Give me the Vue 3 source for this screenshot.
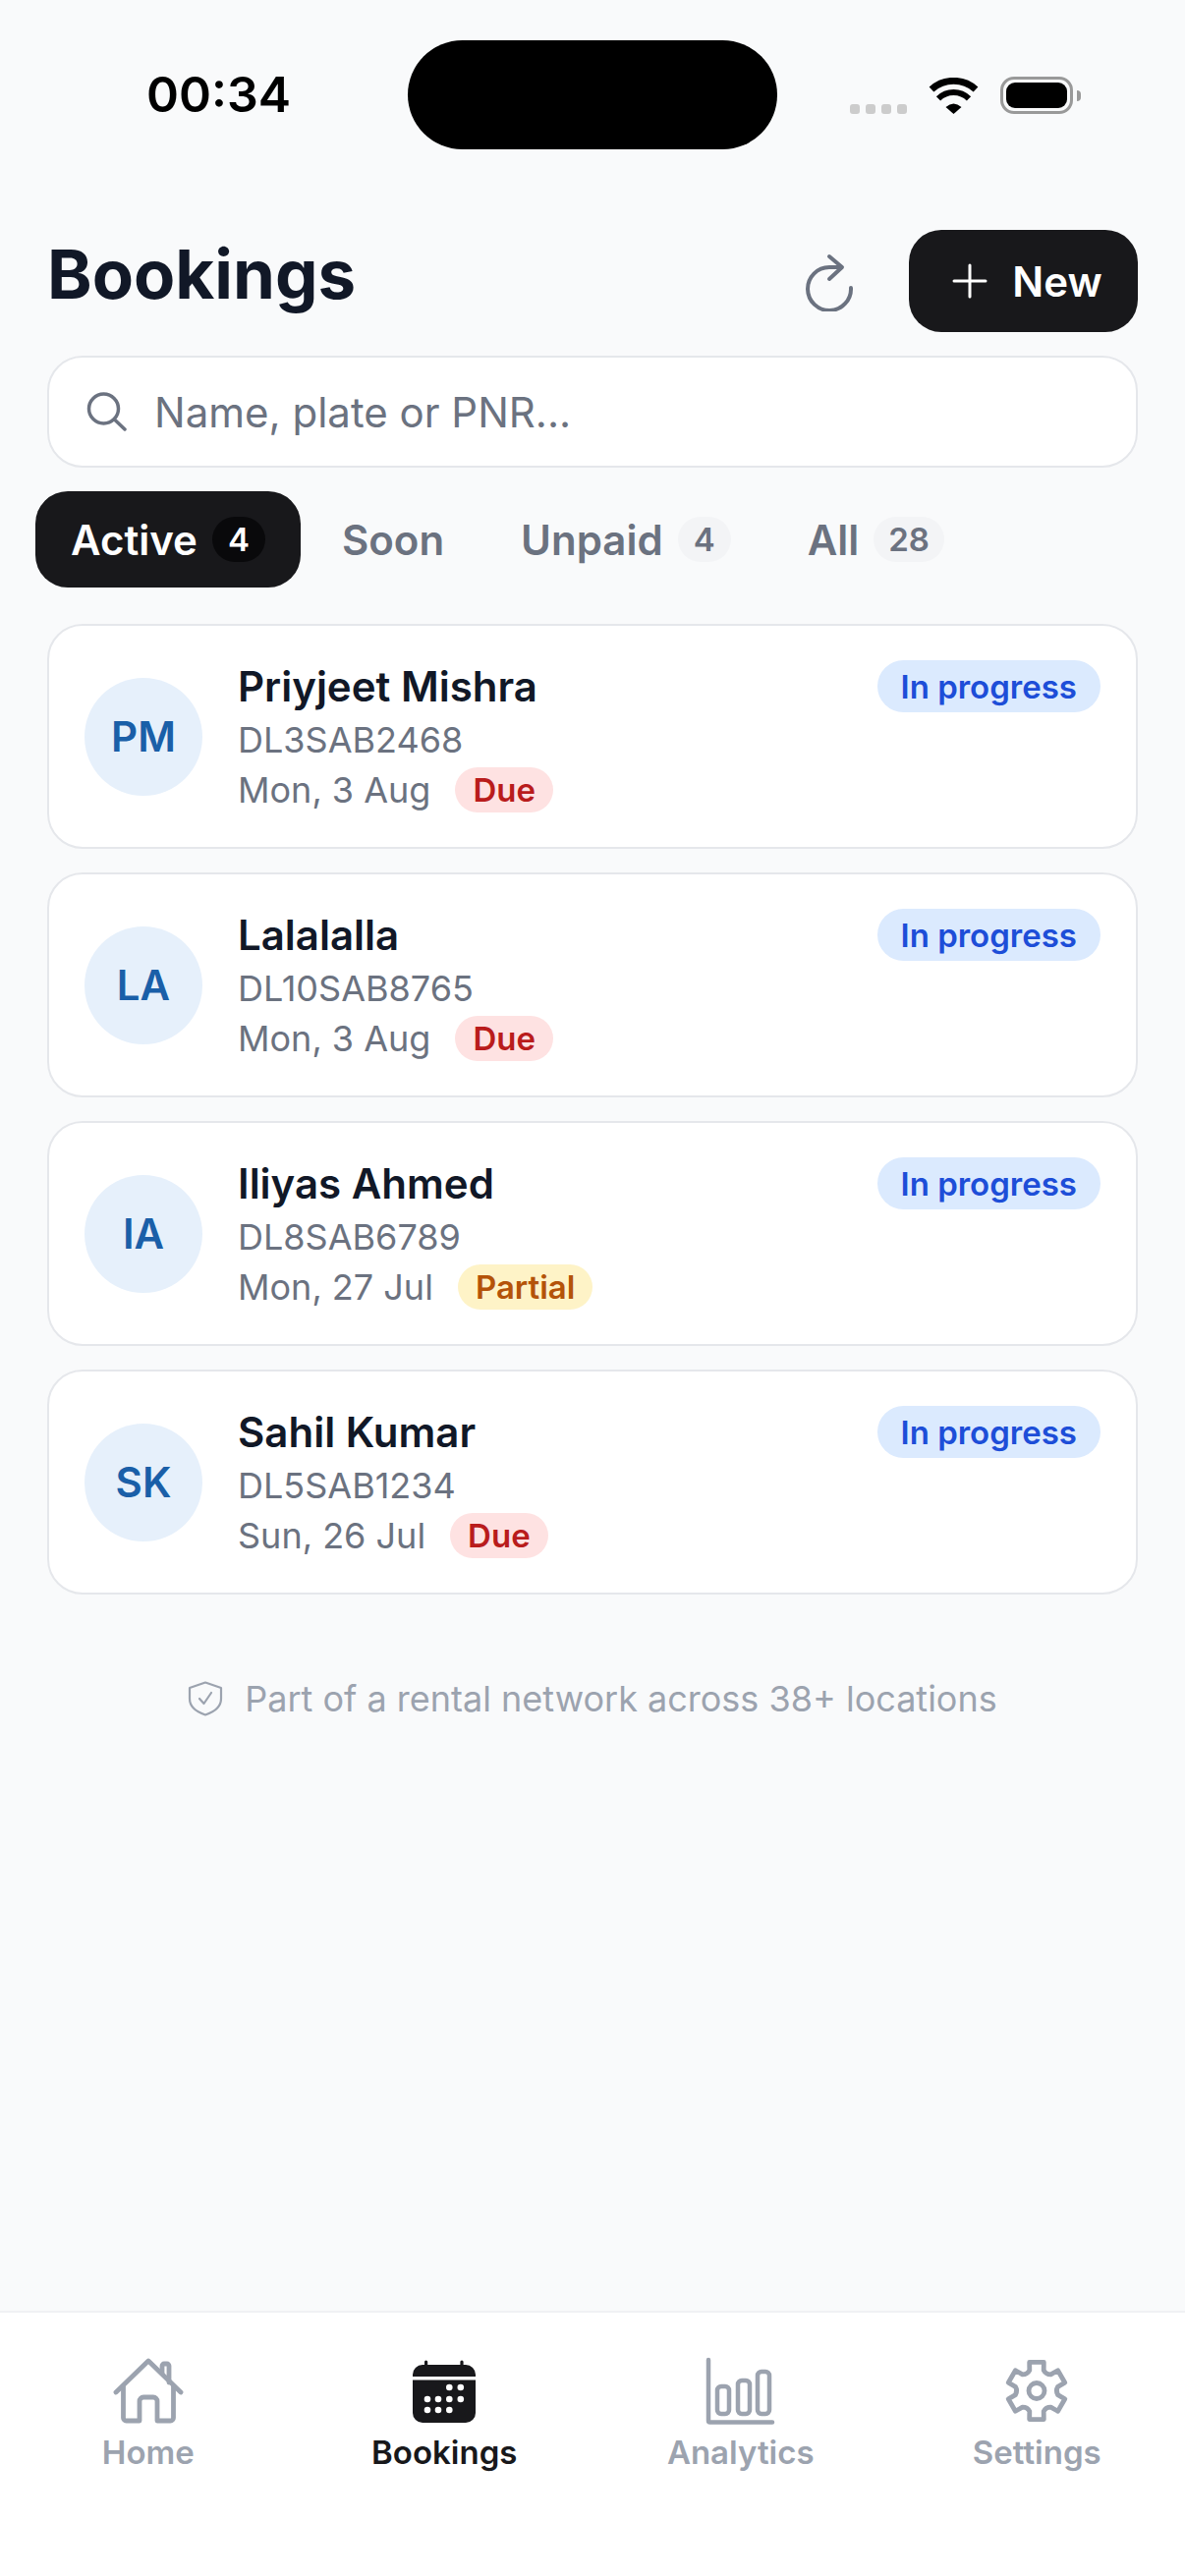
<template>
  <div class="screen">
    <div class="status-bar">
      <span class="time">00:34</span>
      <div class="island"></div>
      <div class="status-icons">
        <div class="signal"><i></i><i></i><i></i><i></i></div>
        <svg class="wifi" width="51" height="37" viewBox="0 0 51 37">
          <path d="M3 12A33.6 33.6 0 0 1 48 12" fill="none" stroke="#000" stroke-width="7" />
          <path d="M10 21.4A22 22 0 0 1 41 21.4" fill="none" stroke="#000" stroke-width="6" />
          <path d="M25.5 37L17.5 30Q25.5 23 33.5 30Z" fill="#000" />
        </svg>
        <div class="battery"><div class="battery-fill"></div></div>
        <div class="battery-nub"></div>
      </div>
    </div>

    <header class="header">
      <h1>Bookings</h1>
      <svg class="refresh" width="60" height="60" viewBox="0 0 60 60" fill="none" stroke="#6b7280" stroke-width="4" stroke-linecap="round" stroke-linejoin="round">
        <path d="M52 36A22 22 0 1 1 30 15H42" />
        <path d="M30 4L43 15L30 27" />
      </svg>
      <button class="new-btn">
        <svg width="36" height="36" viewBox="0 0 36 36" stroke="#fff" stroke-width="3" stroke-linecap="round">
          <path d="M18 2V34M2 18H34" />
        </svg>
        New
      </button>
    </header>

    <div class="search">
      <svg width="42" height="42" viewBox="0 0 42 42" fill="none" stroke="#6b7280" stroke-width="3.5" stroke-linecap="round">
        <circle cx="18.5" cy="18" r="15" />
        <path d="M29.5 29L40 39" />
      </svg>
      <input type="text" placeholder="Name, plate or PNR..." />
    </div>

    <div class="tabs">
      <div v-for="tab in tabs" :key="tab.label" class="tab" :class="{ active: tab.active }">
        <span>{{ tab.label }}</span>
        <span v-if="tab.count" class="count">{{ tab.count }}</span>
      </div>
    </div>

    <div class="list">
      <div v-for="b in bookings" :key="b.plate" class="card">
        <div class="avatar">{{ b.initials }}</div>
        <div class="info">
          <div class="name">{{ b.name }}</div>
          <div class="plate">{{ b.plate }}</div>
          <div class="date-row">
            <span>{{ b.date }}</span>
            <span class="pay" :class="b.pay.toLowerCase()">{{ b.pay }}</span>
          </div>
        </div>
        <span class="state">In progress</span>
      </div>
    </div>

    <div class="network">
      <svg width="36" height="36" viewBox="0 0 36 36" fill="none" stroke="#9ca3af" stroke-width="2.2" stroke-linecap="round" stroke-linejoin="round">
        <path d="M18 1.5L34 7V18C34 26 27 31.5 18 34.5C9 31.5 2 26 2 18V7Z" />
        <path d="M12 18L16.5 23L24 12" />
      </svg>
      <span>Part of a rental network across 38+ locations</span>
    </div>

    <nav class="nav">
      <div class="nav-item">
        <svg width="72" height="72" viewBox="0 0 72 72" fill="none" stroke="#9ca3af" stroke-width="4.8" stroke-linecap="round" stroke-linejoin="round">
          <path d="M3 36L36 4L69 36" />
          <path d="M10.5 30V62A3 3 0 0 0 13.5 65H27V45A4 4 0 0 1 31 41H41A4 4 0 0 1 45 45V65H58.5A3 3 0 0 0 61.5 62V30" />
          <path d="M50 17V9A2 2 0 0 1 52 7H55A2 2 0 0 1 57 9V26" />
        </svg>
        <span>Home</span>
      </div>
      <div class="nav-item current">
        <svg width="72" height="72" viewBox="0 0 72 72" fill="#18181b">
          <path d="M16 8V5A1.6 1.6 0 0 1 19.2 5V8H52.4V5A1.6 1.6 0 0 1 55.6 5V8H58A10 10 0 0 1 68 18V20H4V18A10 10 0 0 1 14 8Z" />
          <path d="M4 23.5H68V57A10 10 0 0 1 58 67H14A10 10 0 0 1 4 57Z" />
          <circle v-for="d in calendarDots" :key="d[0] + '-' + d[1]" :cx="d[0]" :cy="d[1]" r="3.3" fill="#fff" />
        </svg>
        <span>Bookings</span>
      </div>
      <div class="nav-item">
        <svg class="chart" width="72" height="72" viewBox="0 0 72 72" fill="none" stroke="#9ca3af" stroke-width="4.5" stroke-linecap="round" stroke-linejoin="round">
          <path d="M4 3V65A1.5 1.5 0 0 0 5.5 66.5H69" />
          <rect x="13" y="30" width="12" height="28" rx="4" />
          <rect x="34" y="24" width="12" height="34" rx="4" />
          <rect x="54" y="15" width="12" height="43" rx="4" />
        </svg>
        <span>Analytics</span>
      </div>
      <div class="nav-item">
        <svg width="72" height="72" viewBox="0 0 72 72" fill="none" stroke="#9ca3af" stroke-width="4.8" stroke-linecap="round" stroke-linejoin="round">
          <path :d="gearPath" />
          <circle cx="36" cy="34.5" r="8" />
        </svg>
        <span>Settings</span>
      </div>
    </nav>
  </div>
</template>

<script setup>
const tabs = [
  { label: 'Active', count: 4, active: true },
  { label: 'Soon' },
  { label: 'Unpaid', count: 4 },
  { label: 'All', count: 28 },
]

const bookings = [
  { initials: 'PM', name: 'Priyjeet Mishra', plate: 'DL3SAB2468', date: 'Mon, 3 Aug', pay: 'Due' },
  { initials: 'LA', name: 'Lalalalla', plate: 'DL10SAB8765', date: 'Mon, 3 Aug', pay: 'Due' },
  { initials: 'IA', name: 'Iliyas Ahmed', plate: 'DL8SAB6789', date: 'Mon, 27 Jul', pay: 'Partial' },
  { initials: 'SK', name: 'Sahil Kumar', plate: 'DL5SAB1234', date: 'Sun, 26 Jul', pay: 'Due' },
]

const calendarDots = [
  [41.3, 31], [52.8, 31],
  [19, 43], [30, 43], [41.3, 43], [52.8, 43],
  [19, 54], [30, 54], [41.3, 54],
]

// six teeth, one pointing straight up, valleys follow a circle
const polar = (r, deg) => {
  const a = ((deg - 90) * Math.PI) / 180
  return (36 + r * Math.cos(a)).toFixed(1) + ' ' + (34.5 + r * Math.sin(a)).toFixed(1)
}
let gear = 'M' + polar(22, -19)
for (let i = 0; i < 6; i++) {
  const c = i * 60
  gear += 'L' + polar(30, c - 14)
  gear += 'L' + polar(30, c + 14)
  gear += 'L' + polar(22, c + 19)
  gear += 'Q' + polar(19, c + 30) + ' ' + polar(22, c + 41)
}
const gearPath = gear + 'Z'
</script>

<style>
html,
body {
  margin: 0;
  background: #f9fafb;
}
</style>

<style scoped>
.screen {
  min-height: 2622px;
  display: flex;
  flex-direction: column;
  background: #f9fafb;
  font-family: Inter, "Liberation Sans", sans-serif;
  color: #111827;
}

.status-bar {
  height: 234px;
  box-sizing: border-box;
  padding-top: 41px;
  display: flex;
  align-items: flex-start;
}

.time {
  width: 415px;
  height: 111px;
  line-height: 111px;
  padding-left: 30px;
  box-sizing: border-box;
  text-align: center;
  font-size: 50px;
  font-weight: 600;
  color: #000;
}

.island {
  width: 376px;
  height: 111px;
  border-radius: 56px;
  background: #000;
}

.status-icons {
  margin-top: 37px;
  margin-left: 74px;
  display: flex;
  align-items: center;
}

.signal {
  display: flex;
  gap: 6px;
  margin-top: 28px;
  margin-right: 22px;
}

.signal i {
  width: 10px;
  height: 10px;
  border-radius: 3px;
  background: #ccc;
}

.wifi {
  margin-right: 22px;
}

.battery {
  width: 74px;
  height: 38px;
  box-sizing: border-box;
  border: 3px solid #999;
  border-radius: 14px;
  padding: 3px;
}

.battery-fill {
  height: 100%;
  border-radius: 9px;
  background: #000;
}

.battery-nub {
  width: 4px;
  height: 11px;
  margin-left: 4px;
  border-radius: 0 4px 4px 0;
  background: #999;
}

.header {
  display: flex;
  align-items: center;
  padding: 0 48px;
  height: 104px;
}

.header h1 {
  margin: 0 auto 0 0;
  font-size: 69px;
  font-weight: 700;
  color: #111827;
  position: relative;
  top: -7px;
}

.refresh {
  margin-right: 51px;
  margin-top: 2px;
}

.new-btn {
  width: 233px;
  height: 104px;
  border: none;
  border-radius: 33px;
  background: #18181b;
  color: #fff;
  font: 600 42px Inter, sans-serif;
  display: flex;
  align-items: center;
  justify-content: center;
  gap: 25px;
  padding: 0 0 0 8px;
}

.search {
  margin: 24px 48px 0;
  height: 114px;
  box-sizing: border-box;
  border: 2px solid #e5e7eb;
  border-radius: 36px;
  background: #fff;
  display: flex;
  align-items: center;
  gap: 28px;
  padding-left: 37px;
}

.search input {
  flex: 1;
  border: none;
  outline: none;
  background: none;
  padding: 0;
  font: 400 42px Inter, sans-serif;
}

.search input::placeholder {
  color: #6b7280;
  opacity: 1;
}

.tabs {
  margin-top: 24px;
  padding-left: 36px;
  display: flex;
  gap: 6px;
}

.tab {
  height: 98px;
  box-sizing: border-box;
  padding: 0 36px;
  border-radius: 33px;
  display: flex;
  align-items: center;
  gap: 15px;
  font-size: 42px;
  font-weight: 600;
  color: #6b7280;
}

.tab.active {
  background: #18181b;
  color: #fff;
}

.count {
  min-width: 54px;
  height: 46px;
  padding: 0 15px;
  box-sizing: border-box;
  border-radius: 23px;
  background: #f3f4f6;
  display: flex;
  align-items: center;
  justify-content: center;
  font-size: 33px;
  font-weight: 600;
}

.tab.active .count {
  background: #09090b;
}

.list {
  margin: 37px 48px 0;
  display: flex;
  flex-direction: column;
  gap: 24px;
}

.card {
  height: 229px;
  box-sizing: border-box;
  padding: 0 36px;
  border: 2px solid #e5e7eb;
  border-radius: 36px;
  background: #fff;
  display: flex;
  align-items: center;
  gap: 36px;
}

.avatar {
  width: 120px;
  height: 120px;
  flex-shrink: 0;
  border-radius: 50%;
  background: #e6f0fb;
  color: #1a5fa8;
  display: flex;
  align-items: center;
  justify-content: center;
  font-size: 42px;
  font-weight: 600;
}

.info {
  flex: 1;
  align-self: flex-start;
  padding-top: 35px;
}

.name {
  height: 54px;
  line-height: 54px;
  font-size: 42px;
  font-weight: 600;
  color: #111827;
}

.plate {
  height: 50px;
  line-height: 50px;
  margin-top: 2px;
  font-size: 36px;
  color: #6b7280;
}

.date-row {
  height: 50px;
  margin-top: 1px;
  display: flex;
  align-items: center;
  gap: 25px;
  font-size: 36px;
  color: #6b7280;
}

.pay {
  height: 46px;
  padding: 0 18px;
  border-radius: 23px;
  display: flex;
  align-items: center;
  font-size: 33px;
  font-weight: 600;
}

.pay.due {
  background: #fee2e2;
  color: #b91c1c;
}

.pay.partial {
  background: #fef3c7;
  color: #b45309;
}

.state {
  align-self: flex-start;
  margin-top: 35px;
  height: 53px;
  padding: 0 24px;
  border-radius: 27px;
  background: #dbeafe;
  color: #1d4ed8;
  display: flex;
  align-items: center;
  font-size: 33px;
  font-weight: 600;
}

.network {
  margin-top: 84px;
  display: flex;
  align-items: center;
  justify-content: center;
  gap: 22px;
  font-size: 36px;
  color: #9ca3af;
}

.nav {
  margin-top: auto;
  height: 270px;
  box-sizing: border-box;
  border-top: 2px solid #f0f1f4;
  background: #fff;
  padding-top: 45px;
  display: grid;
  grid-template-columns: repeat(4, 1fr);
}

.nav-item {
  display: flex;
  flex-direction: column;
  align-items: center;
  font-size: 33px;
  font-weight: 600;
  line-height: 40px;
  color: #9ca3af;
}

.nav-item.current {
  color: #18181b;
}

.nav-item svg {
  margin-bottom: 5px;
}

.nav-item .chart {
  margin-right: 2px;
}
</style>
